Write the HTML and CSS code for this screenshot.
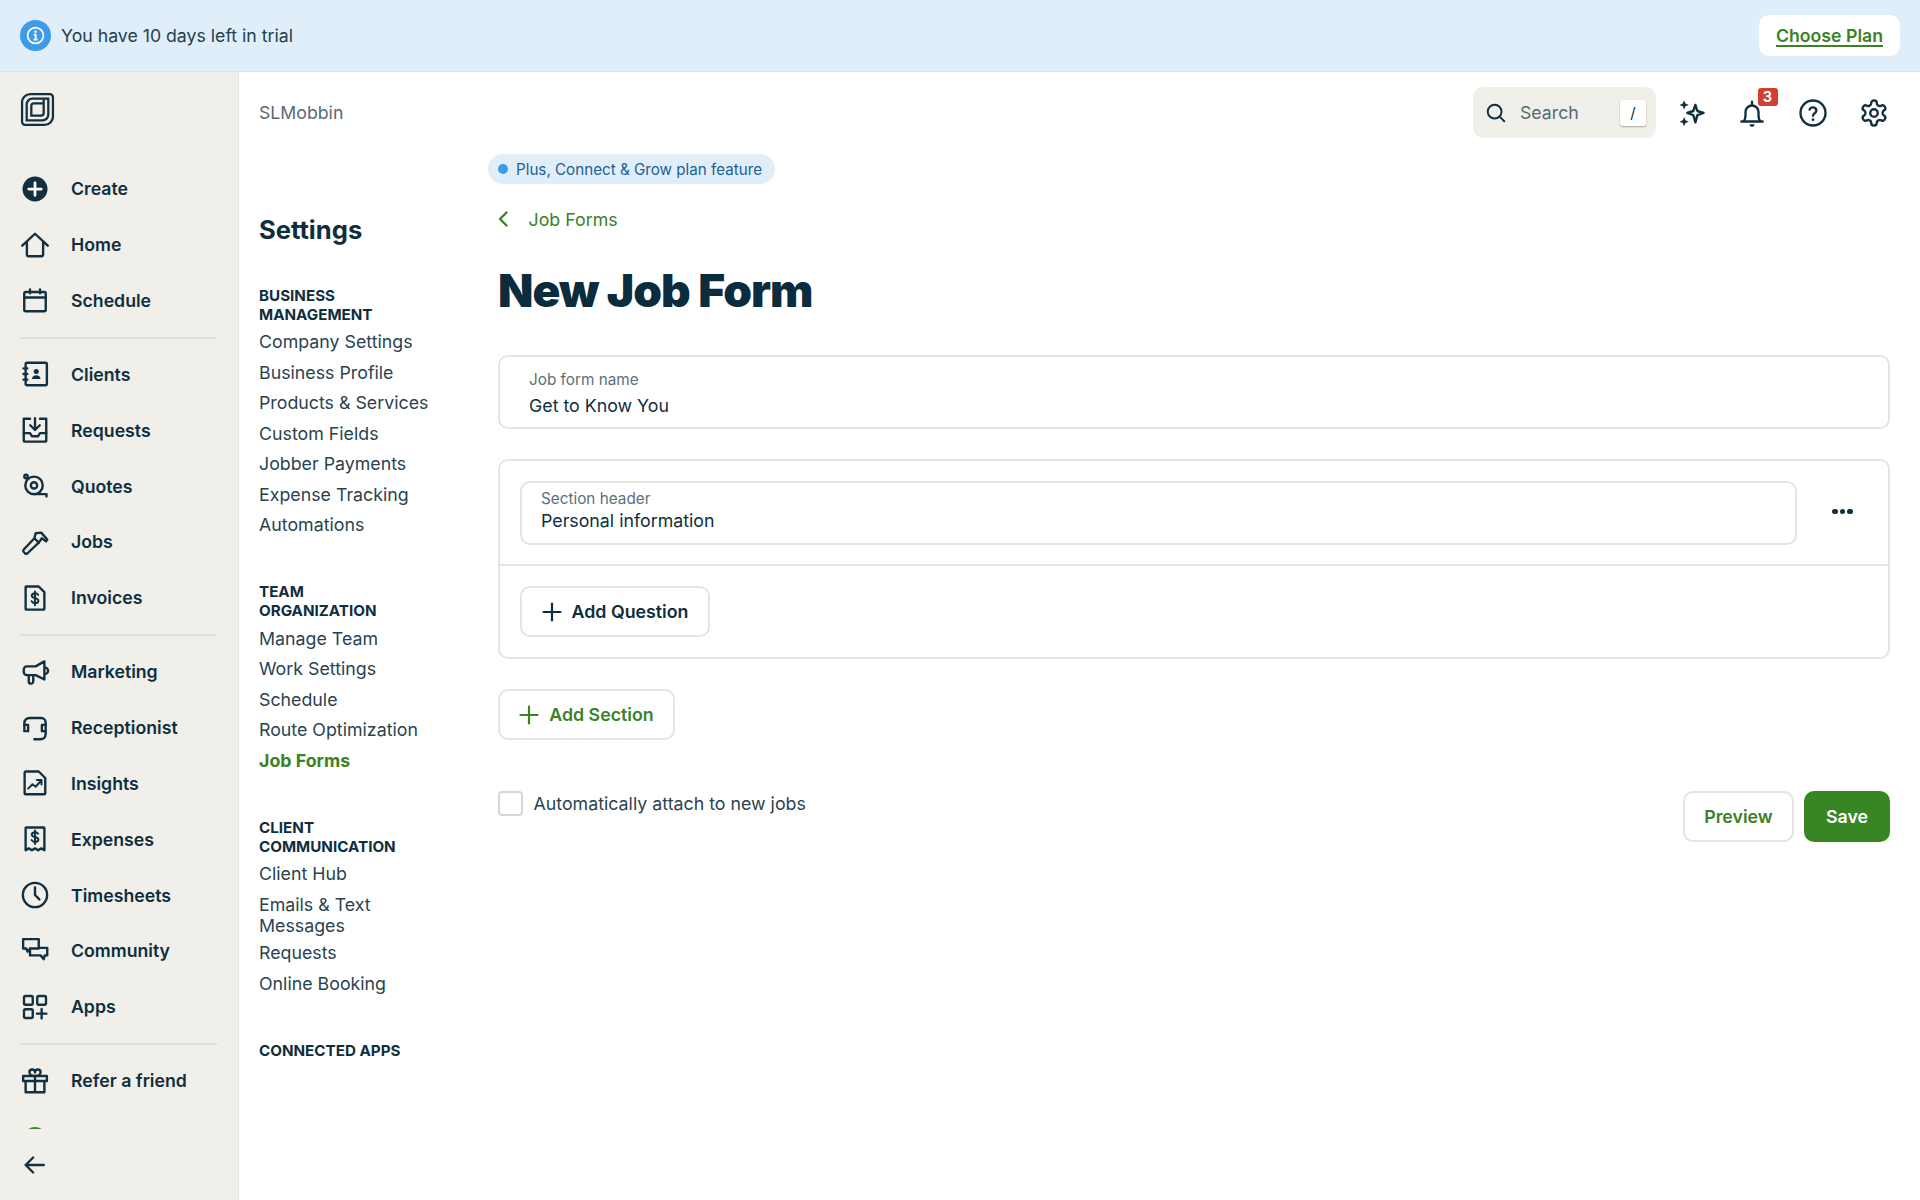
FILE: index.html
```html
<!DOCTYPE html>
<html lang="en">
<head>
<meta charset="utf-8">
<title>New Job Form</title>
<link rel="stylesheet" href="styles.css">
</head>
<body>
<header class="banner">
  <div class="banner-left">
    <span class="info-badge"><svg class="info-icon" viewBox="0 0 24 24"><circle cx="12" cy="12" r="9"/><circle class="dot" cx="12" cy="7.6" r="1.4"/><path d="M10 11h2.2v5.5M9.8 16.8h4.6"/></svg></span>
    <span class="banner-text">You have 10 days left in trial</span>
  </div>
  <a class="choose-plan"><span>Choose Plan</span></a>
</header>
<div class="app">
  <aside class="sidebar">
    <div class="side-scroll">
      <div class="logo">
        <svg class="logo-svg" viewBox="0 0 34 34"><path d="M10 2H29a3 3 0 0 1 3 3V24a8 8 0 0 1-8 8H5a3 3 0 0 1-3-3V10a8 8 0 0 1 8-8Z"/><path d="M12 6.500H27.500V22a5.500 5.500 0 0 1-5.500 5.500H6.500V12A5.500 5.500 0 0 1 12 6.500Z"/><path d="M23 7V20.500a2.500 2.500 0 0 1-2.500 2.500H11V13.500a2.500 2.500 0 0 1 2.500-2.500H23"/></svg>
      </div>
      <nav class="side-nav">
        <a class="side-item"><svg class="ic" viewBox="0 0 24 24"><circle class="solid" cx="12" cy="12" r="10"/><path class="inv" d="M12 7v10M7 12h10"/></svg><span>Create</span></a>
        <a class="side-item"><svg class="ic" viewBox="0 0 24 24"><path d="M1.800 12.500 12 3l10.200 9.500M5.500 10v9.500A1.500 1.500 0 0 0 7 21h10a1.500 1.500 0 0 0 1.500-1.500V10"/></svg><span>Home</span></a>
        <a class="side-item"><svg class="ic" viewBox="0 0 24 24"><rect x="3.400" y="4.800" width="17.200" height="15.400" rx="1.200"/><path d="M3.500 9.200h17M8 2.700v3M16 2.700v3"/></svg><span>Schedule</span></a>
        <hr class="side-sep">
        <a class="side-item"><svg class="ic" viewBox="0 0 24 24"><rect x="4.500" y="3" width="17" height="18" rx="1.200"/><path d="M2.800 7.500h3M2.800 12h3M2.800 16.500h3"/><circle class="solid" cx="13" cy="10" r="2"/><path class="solid" d="M9.500 16c.4-2.300 1.800-3 3.500-3s3.100.7 3.500 3Z"/></svg><span>Clients</span></a>
        <a class="side-item"><svg class="ic" viewBox="0 0 24 24"><path d="M8 3H3v17.500A.8.800 0 0 0 3.800 21.300h16.400a.8.800 0 0 0 .8-.8V3h-5"/><path d="M12 2.500v9M8.200 8.200l3.800 3.800 3.800-3.800"/><path d="M3 14.500h5l1.500 2.500h5l1.500-2.500h5"/></svg><span>Requests</span></a>
        <a class="side-item"><svg class="ic" viewBox="0 0 24 24"><circle cx="11.200" cy="11.500" r="7"/><circle cx="11.200" cy="11.500" r="2.500"/><circle cx="4.800" cy="4.400" r="1.400"/><path d="M11.200 18.500h10v1.800"/></svg><span>Quotes</span></a>
        <a class="side-item"><svg class="ic" viewBox="0 0 24 24"><path d="M11.500 9 15 12.500 6 21a1.500 1.500 0 0 1-2 0l-1-1a1.500 1.500 0 0 1 0-2Z"/><path d="M11.500 9l1-4 4.500-.5 4.800 5.500-1 1.500-3.300-2.500-2.500 3.500"/></svg><span>Jobs</span></a>
        <a class="side-item"><svg class="ic" viewBox="0 0 24 24"><path d="M5 2.800h10l4.500 4.500v13.200a.8.800 0 0 1-.8.800H5.300a.8.800 0 0 1-.8-.8V3.300a.5.500 0 0 1 .5-.5Z"/><path class="thin" d="M14.500 9.500c-.5-1-1.400-1.400-2.500-1.400-1.500 0-2.600.8-2.600 2 0 2.600 5.300 1.400 5.300 4 0 1.300-1.200 2-2.700 2-1.200 0-2.200-.5-2.700-1.500M12 6.800v11"/></svg><span>Invoices</span></a>
        <hr class="side-sep">
        <a class="side-item"><svg class="ic" viewBox="0 0 24 24"><path d="M19.500 3.500 12.500 7.500H5.500A2.500 2.500 0 0 0 3 10v2a2.500 2.500 0 0 0 2.500 2.500h7l7 3.500Z"/><path d="M7 14.500v5a1.800 1.800 0 0 0 3.600 0v-5M20 8.500a2.500 2.500 0 0 1 0 5"/></svg><span>Marketing</span></a>
        <a class="side-item"><svg class="ic" viewBox="0 0 24 24"><path d="M3.500 14V8a4 4 0 0 1 4-4h9.500a3.500 3.500 0 0 1 3.500 3.500V17a4 4 0 0 1-4 4h-5"/><path d="M3.500 9.500h3v5h-3M20.500 9.500h-3v5h3"/></svg><span>Receptionist</span></a>
        <a class="side-item"><svg class="ic" viewBox="0 0 24 24"><path d="M4.500 2.800h10.500l5.200 5.200v12.200a.8.800 0 0 1-.8.800H4.500a.8.800 0 0 1-.8-.8V3.600a.8.800 0 0 1 .8-.8Z"/><path class="thin" d="M6.500 16.500l3.500-3.500 2.500 2 4.500-5M13.500 9.500h3.700v3.700"/></svg><span>Insights</span></a>
        <a class="side-item"><svg class="ic" viewBox="0 0 24 24"><path d="M5 2.800h14a.5.500 0 0 1 .5.500V21l-2.500-1.500-2.500 1.500-2.500-1.500-2.500 1.500L7 19.500 4.500 21V3.300a.5.500 0 0 1 .5-.5Z"/><path class="thin" d="M14.500 7.800c-.5-.9-1.400-1.300-2.500-1.300-1.500 0-2.600.8-2.600 2 0 2.500 5.300 1.300 5.300 3.900 0 1.200-1.200 1.900-2.700 1.900-1.200 0-2.200-.5-2.700-1.400M12 5.200v10.800"/></svg><span>Expenses</span></a>
        <a class="side-item"><svg class="ic" viewBox="0 0 24 24"><circle cx="12" cy="12" r="9.700"/><path d="M12 6v6l3.500 3.500"/></svg><span>Timesheets</span></a>
        <a class="side-item"><svg class="ic" viewBox="0 0 24 24"><path d="M2.500 2.500h12.500v7.500H8.500l-2.500 2.500-1-2.500H2.500Z"/><path d="M8 10v5.500h8.500l2.500 3 .8-3h2V9.500H15"/></svg><span>Community</span></a>
        <a class="side-item"><svg class="ic" viewBox="0 0 24 24"><rect x="3.200" y="3.200" width="7" height="7" rx="1.200"/><rect x="13.800" y="3.200" width="7" height="7" rx="1.200"/><rect x="3.200" y="13.800" width="7" height="7" rx="1.200"/><path d="M17.300 13.500v7.600M13.500 17.300h7.600"/></svg><span>Apps</span></a>
        <hr class="side-sep">
        <a class="side-item"><svg class="ic" viewBox="0 0 24 24"><path d="M2.500 8h19v4h-19ZM4.500 12v9h15v-9M12 8v13"/><path d="M12 8C10 8 7.500 7 7.500 5a2.200 2.200 0 0 1 4.500 0 2.200 2.200 0 0 1 4.500 0C16.500 7 14 8 12 8Z"/></svg><span>Refer a friend</span></a>
        <div class="avatar-row"><span class="avatar"></span></div>
      </nav>
    </div>
    <div class="side-foot"><svg class="ic" viewBox="0 0 24 24"><path d="M19 12H4.500M10.500 6l-6 6 6 6"/></svg></div>
  </aside>
  <main class="main">
    <div class="topbar">
      <span class="account">SLMobbin</span>
      <div class="tools">
        <div class="search">
          <svg class="search-ic" viewBox="0 0 24 24"><circle cx="10.500" cy="10.500" r="7.500"/><path d="m16 16 5 5"/></svg>
          <span class="search-text">Search</span>
          <kbd class="key">/</kbd>
        </div>
        <a class="tool"><svg class="ic" viewBox="0 0 24 24"><path d="m15.500 5.500 1.600 4.900 4.900 1.600-4.900 1.700-1.600 5.800-1.700-5.800-4.800-1.700 4.800-1.600Z"/><path class="solid" d="m6.500 1.800 1.100 2.600 2.600 1.100-2.600 1.100-1.100 2.600-1.100-2.600-2.600-1.100 2.600-1.100ZM6.500 15.200l1.100 2.600 2.600 1.100-2.600 1.100-1.100 2.600-1.100-2.600-2.600-1.100 2.600-1.100Z"/></svg></a>
        <a class="tool bell"><svg class="ic" viewBox="0 0 24 24"><path d="M3.500 18.800h17M5.500 18.800c1-1.300 1.300-2.500 1.300-5v-2.600a5.200 5.200 0 0 1 10.400 0v2.600c0 2.500.3 3.700 1.300 5"/><path d="M12 3v2.800"/><path class="solid" d="M10 21h4a2 2 0 0 1-4 0Z"/></svg><span class="badge">3</span></a>
        <a class="tool"><svg class="ic" viewBox="0 0 24 24"><circle cx="12" cy="12" r="10"/><path d="M9.300 9.300a2.800 2.800 0 0 1 5.400.8c0 1.900-2.700 2.300-2.700 4"/><circle class="solid" cx="12" cy="17.300" r="1.100"/></svg></a>
        <a class="tool"><svg class="ic" viewBox="0 0 24 24"><path d="M12.220 2h-.44a2 2 0 0 0-2 2v.18a2 2 0 0 1-1 1.730l-.43.250a2 2 0 0 1-2 0l-.15-.08a2 2 0 0 0-2.730.730l-.22.380a2 2 0 0 0 .730 2.730l.15.100a2 2 0 0 1 1 1.720v.510a2 2 0 0 1-1 1.740l-.15.090a2 2 0 0 0-.730 2.730l.22.380a2 2 0 0 0 2.730.730l.15-.08a2 2 0 0 1 2 0l.43.250a2 2 0 0 1 1 1.730V20a2 2 0 0 0 2 2h.44a2 2 0 0 0 2-2v-.18a2 2 0 0 1 1-1.730l.43-.25a2 2 0 0 1 2 0l.15.08a2 2 0 0 0 2.730-.730l.22-.390a2 2 0 0 0-.730-2.730l-.15-.08a2 2 0 0 1-1-1.740v-.5a2 2 0 0 1 1-1.740l.15-.09a2 2 0 0 0 .730-2.730l-.22-.38a2 2 0 0 0-2.730-.730l-.15.08a2 2 0 0 1-2 0l-.43-.25a2 2 0 0 1-1-1.730V4a2 2 0 0 0-2-2Z"/><circle cx="12" cy="12" r="3"/></svg></a>
      </div>
    </div>
    <div class="body-grid">
      <nav class="settings">
        <h2 class="settings-title">Settings</h2>
        <section class="set-group">
          <h3 class="set-head">Business Management</h3>
          <a class="set-link">Company Settings</a>
          <a class="set-link">Business Profile</a>
          <a class="set-link">Products &amp; Services</a>
          <a class="set-link">Custom Fields</a>
          <a class="set-link">Jobber Payments</a>
          <a class="set-link">Expense Tracking</a>
          <a class="set-link">Automations</a>
        </section>
        <section class="set-group">
          <h3 class="set-head">Team Organization</h3>
          <a class="set-link">Manage Team</a>
          <a class="set-link">Work Settings</a>
          <a class="set-link">Schedule</a>
          <a class="set-link">Route Optimization</a>
          <a class="set-link active">Job Forms</a>
        </section>
        <section class="set-group">
          <h3 class="set-head">Client Communication</h3>
          <a class="set-link">Client Hub</a>
          <a class="set-link wrapped">Emails &amp; Text Messages</a>
          <a class="set-link">Requests</a>
          <a class="set-link">Online Booking</a>
        </section>
        <section class="set-group">
          <h3 class="set-head">Connected Apps</h3>
        </section>
      </nav>
      <div class="content">
        <span class="pill"><i class="pill-dot"></i>Plus, Connect &amp; Grow plan feature</span>
        <div class="form-area">
          <a class="back"><svg class="back-ic" viewBox="0 0 12 18"><path d="M9.500 2.500 3 9l6.500 6.500"/></svg><span>Job Forms</span></a>
          <h1 class="title">New Job Form</h1>
          <div class="field name-field">
            <span class="field-label">Job form name</span>
            <span class="field-value">Get to Know You</span>
          </div>
          <div class="card">
            <div class="card-head">
              <div class="field section-field">
                <span class="field-label small">Section header</span>
                <span class="field-value">Personal information</span>
              </div>
              <span class="more"><i></i><i></i><i></i></span>
            </div>
            <div class="card-body">
              <a class="btn btn-dark"><svg class="plus" viewBox="0 0 20 20"><path d="M10 1.500v17M1.500 10h17"/></svg>Add Question</a>
            </div>
          </div>
          <a class="btn btn-green add-section"><svg class="plus" viewBox="0 0 20 20"><path d="M10 1.500v17M1.500 10h17"/></svg>Add Section</a>
          <div class="form-foot">
            <label class="check"><span class="check-box"></span><span class="check-text">Automatically attach to new jobs</span></label>
            <div class="actions">
              <a class="btn btn-green preview">Preview</a>
              <a class="btn save">Save</a>
            </div>
          </div>
        </div>
      </div>
    </div>
  </main>
</div>
</body>
</html>
```
FILE: styles.css
```css
* { box-sizing: border-box; }
html, body { height: 100%; }
body {
  margin: 0;
  height: 1200px;
  overflow: hidden;
  font-family: Inter, "Liberation Sans", sans-serif;
  color: #0f2e3d;
  background: #fff;
  display: flex;
  flex-direction: column;
}
a { color: inherit; text-decoration: none; }

.banner {
  height: 72px;
  flex: none;
  background: #e0eefa;
  border-bottom: 1px solid #d8dfe3;
  display: flex;
  align-items: center;
  justify-content: space-between;
  padding: 0 20px;
}
.banner-left { display: flex; align-items: center; gap: 10px; }
.info-badge {
  width: 31px; height: 31px;
  border-radius: 50%;
  background: #3d9be9;
  display: flex; align-items: center; justify-content: center;
}
.info-icon { width: 21px; height: 21px; fill: none; stroke: #fff; stroke-width: 2; }
.info-icon .dot { fill: #fff; stroke: none; }
.banner-text { font-size: 17.700px; color: #24404e; }
.choose-plan {
  background: #fff;
  border-radius: 10px;
  width: 141px; height: 41px;
  display: flex; align-items: center; justify-content: center;
  color: #3a8224;
  font-size: 17.700px;
  font-weight: 600;
}
.choose-plan span { text-decoration: underline; text-decoration-thickness: 2px; text-underline-offset: 3px; }

.app { flex: 1; display: flex; min-height: 0; }
.sidebar {
  width: 239px; flex: none;
  background: #f0efea;
  border-right: 1px solid #e4e4df;
  display: flex; flex-direction: column;
}
.side-scroll { flex: 1; overflow: hidden; min-height: 0; }
.logo { height: 89px; padding: 20px 0 0 20px; }
.logo-svg { width: 35px; height: 35px; fill: none; stroke: #12303f; stroke-width: 2.200; display: block; }
.side-nav { display: flex; flex-direction: column; }
.side-item {
  height: 55.850px;
  flex: none;
  display: flex; align-items: center;
  gap: 21px;
  padding-left: 20px;
  font-size: 17.700px;
  font-weight: 600;
  color: #0f2e3d;
}
.side-sep { border: 0; height: 2px; background: #e0e0d9; margin: 8px 21px 8px 20px; flex: none; }
.ic {
  width: 30px; height: 30px; flex: none;
  fill: none; stroke: #12303f; stroke-width: 1.900;
  stroke-linecap: round; stroke-linejoin: round;
  display: block;
}
.ic .solid { fill: #12303f; stroke: none; }
.ic .inv { stroke: #fff; stroke-width: 2.200; }
.ic .thin { stroke-width: 1.600; }
.avatar-row { padding: 18.700px 0 0 23px; }
.avatar { display: block; width: 24px; height: 24px; border-radius: 50%; background: #3a8224; }
.side-foot { height: 71px; flex: none; padding: 21px 0 0 20px; }

.main { flex: 1; min-width: 0; display: flex; flex-direction: column; }
.topbar {
  height: 82px; flex: none;
  display: flex; align-items: center; justify-content: space-between;
  padding: 0 31px 1px 20px;
}
.account { font-size: 17.700px; color: #556a75; }
.tools { display: flex; align-items: center; }
.search {
  width: 183px; height: 51px;
  background: #f0efea;
  border-radius: 10px;
  display: flex; align-items: center;
  padding: 0 10px 0 12px;
  margin-right: 20px;
}
.search-ic { width: 22px; height: 22px; fill: none; stroke: #12303f; stroke-width: 2.100; stroke-linecap: round; flex: none; }
.search-text { font-size: 17.700px; color: #556a75; margin-left: 13px; flex: 1; }
.key {
  width: 26px; height: 26px;
  background: #fff;
  border-radius: 3px;
  box-shadow: 0 1px 2px rgba(0,0,0,.3);
  font: 400 15px Inter, sans-serif;
  color: #12303f;
  display: flex; align-items: center; justify-content: center;
}
.tool { width: 30px; height: 30px; margin-right: 31px; position: relative; display: block; }
.tool:last-child { margin-right: 0; }
.badge {
  position: absolute;
  top: -10px; left: 20.500px;
  width: 20px; height: 18px;
  background: #d13f30;
  border-radius: 3px;
  color: #fff;
  font-size: 14.500px; font-weight: 700;
  display: flex; align-items: center; justify-content: center;
}

.body-grid { flex: 1; display: flex; min-height: 0; padding-left: 20px; }
.settings { width: 229px; flex: none; }
.settings-title { margin: 59px 0 38.500px; font-size: 25.600px; line-height: 34px; font-weight: 700; color: #0f2e3d; }
.set-group { width: 180px; margin-bottom: 42px; }
.set-head {
  width: 150px;
  margin: 0 0 3px;
  font-size: 15.200px; line-height: 19px; font-weight: 700;
  text-transform: uppercase;
  color: #0f2e3d;
}
.set-link {
  display: block;
  font-size: 17.800px; line-height: 21.500px;
  padding: 4.500px 0;
  color: #2a4350;
}
.set-link.wrapped { padding-bottom: 1px; }
.set-link.active { color: #3a8224; font-weight: 700; }

.content { flex: 1; min-width: 0; padding-right: 30px; }
.pill {
  display: inline-flex; align-items: center;
  height: 30px;
  padding: 0 13px 0 10px;
  border-radius: 15px;
  background: #e0eefa;
  color: #1f5e94;
  font-size: 15.200px;
}
.pill-dot { width: 10px; height: 10px; border-radius: 50%; background: #3d9be9; margin-right: 8px; }
.form-area { padding-left: 10px; }
.back {
  display: flex; align-items: center;
  height: 30px; margin-top: 20px;
  color: #3a8224; font-size: 17.800px;
}
.back-ic { width: 12px; height: 18px; fill: none; stroke: #3a8224; stroke-width: 2.400; stroke-linecap: round; stroke-linejoin: round; margin-right: 19.500px; margin-left: -1px; }
.title { margin: 27px 0 36px; font-size: 46px; line-height: 58px; font-weight: 900; letter-spacing: -0.9px; color: #0b2c3d; }
.field {
  border: 2px solid #e4e4e1;
  border-radius: 10px;
  display: flex; flex-direction: column;
  background: #fff;
}
.name-field { height: 74px; padding: 13px 29px 0; }
.field-label { font-size: 15.300px; line-height: 20px; color: #5c6f79; }
.field-label.small { line-height: 18px; }
.field-value { font-size: 17.800px; line-height: 24px; margin-top: 4px; color: #0f2e3d; }
.section-field { flex: 1; height: 64px; padding: 7px 19px 0; }
.section-field .field-value { margin-top: 1.500px; }
.card { margin-top: 30px; border: 2px solid #e4e4e1; border-radius: 10px; }
.card-head { display: flex; align-items: center; padding: 19.500px 20px 19.500px 20px; border-bottom: 2px solid #e4e4e1; }
.more { width: 91px; display: flex; justify-content: center; gap: 2px; margin-right: -20px; margin-top: -2px; }
.more i { width: 5.500px; height: 5.500px; border-radius: 50%; background: #12303f; }
.card-body { padding: 20px 20px 20px; }
.btn {
  display: inline-flex; align-items: center; justify-content: center;
  height: 51px;
  border: 2px solid #e4e4e1;
  border-radius: 10px;
  font-size: 17.800px; font-weight: 600;
  background: #fff;
}
.btn-dark { width: 190px; color: #0f2e3d; }
.btn-green { color: #3a8224; }
.add-section { width: 177px; margin-top: 30px; display: flex; }
.plus { width: 20px; height: 20px; fill: none; stroke: currentColor; stroke-width: 2.200; stroke-linecap: round; margin-right: 10px; flex: none; }
.form-foot { display: flex; justify-content: space-between; align-items: flex-start; margin-top: 51px; }
.check { display: flex; align-items: center; gap: 10.500px; font-size: 17.800px; color: #2a4350; height: 25px; }
.check-box { width: 25px; height: 25px; border: 2px solid #d6d6d3; border-radius: 4px; background: #fff; }
.actions { display: flex; gap: 10px; }
.preview { width: 111px; }
.save { width: 86px; background: #388523; border: 0; color: #fff; }
```
